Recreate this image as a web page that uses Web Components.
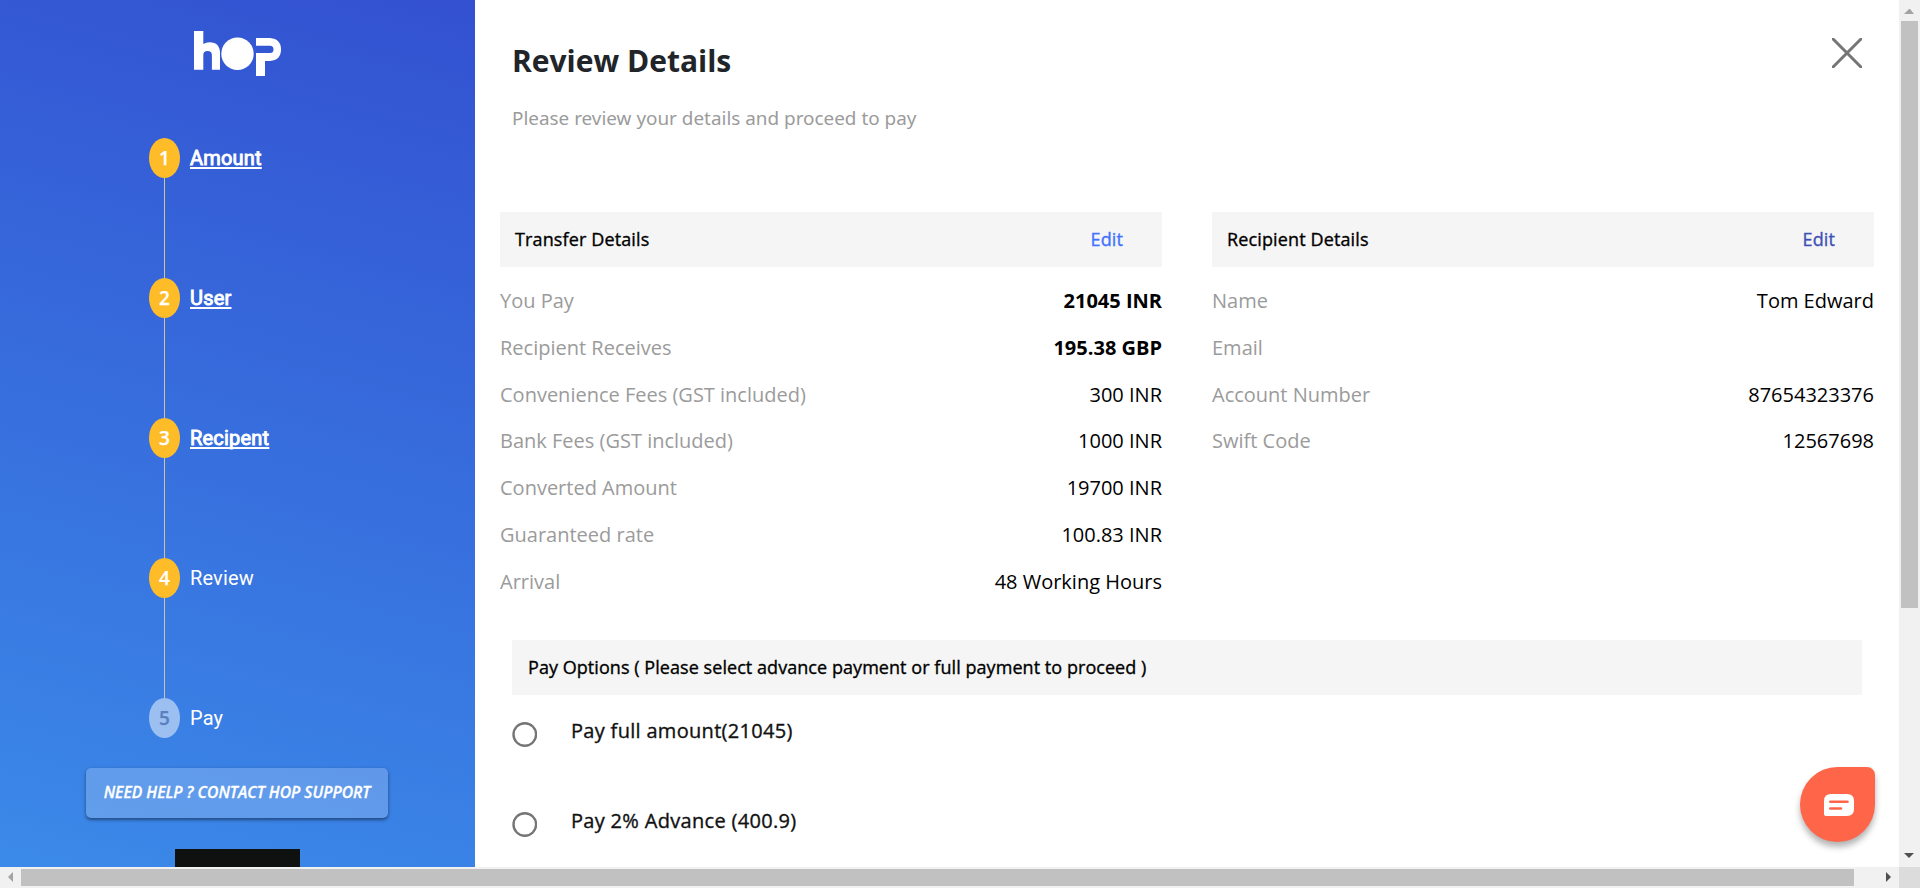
<!DOCTYPE html>
<html lang="en">
<head>
<meta charset="utf-8">
<title>Review Details</title>
<style>
html,body{margin:0;height:100%;overflow:hidden;background:#fff}
body{font-family:"Open Sans","Noto Sans",sans-serif;color:#000}
</style>
</head>
<body>
<hop-window>
  <hop-sidebar slot="side">
    <hop-step n="1" link>Amount</hop-step>
    <hop-step n="2" link>User</hop-step>
    <hop-step n="3" link>Recipent</hop-step>
    <hop-step n="4">Review</hop-step>
    <hop-step n="5" pending>Pay</hop-step>
  </hop-sidebar>
  <hop-review>
    <hop-panel slot="panels" heading="Transfer Details" style="--edit:#4172ff">
      <hop-row label="You Pay" strong>21045 INR</hop-row>
      <hop-row label="Recipient Receives" strong>195.38 GBP</hop-row>
      <hop-row label="Convenience Fees (GST included)">300 INR</hop-row>
      <hop-row label="Bank Fees (GST included)">1000 INR</hop-row>
      <hop-row label="Converted Amount">19700 INR</hop-row>
      <hop-row label="Guaranteed rate">100.83 INR</hop-row>
      <hop-row label="Arrival">48 Working Hours</hop-row>
    </hop-panel>
    <hop-panel slot="panels" heading="Recipient Details" style="--edit:#3f51b5">
      <hop-row label="Name">Tom Edward</hop-row>
      <hop-row label="Email"></hop-row>
      <hop-row label="Account Number">87654323376</hop-row>
      <hop-row label="Swift Code">12567698</hop-row>
    </hop-panel>
    <hop-option slot="options">Pay full amount(21045)</hop-option>
    <hop-option slot="options">Pay 2% Advance (400.9)</hop-option>
  </hop-review>
  <hop-chat slot="chat"></hop-chat>
</hop-window>
<script>
const define = (name, html) => customElements.define(name, class extends HTMLElement {
  constructor() {
    super();
    const t = document.createElement('template');
    t.innerHTML = typeof html === 'function' ? html(this) : html;
    this.attachShadow({mode: 'open'}).append(t.content.cloneNode(true));
  }
});

define('hop-window', `
<style>
:host{display:grid;grid-template-columns:1899px 21px;grid-template-rows:867px 21px;width:1920px;height:888px;position:relative;overflow:hidden}
.view{display:flex;overflow:hidden;min-height:0}
.v{background:#f1f1f1;display:flex;flex-direction:column;align-items:center}
.h{background:#f1f1f1;display:flex;align-items:center}
.corner{background:#dcdcdc}
.v i{width:17px;height:587px;background:#c1c1c1;margin-bottom:auto}
.h i{height:17px;width:1833px;background:#c1c1c1;margin-right:auto}
svg{width:21px;height:21px;display:block;flex:none}
</style>
<div class="view"><slot name="side"></slot><slot></slot></div>
<div class="v"><svg><path d="M5 14 10 9h1l4 5z" fill="#a3a3a3"/></svg><i></i><svg><path d="M5 7h10l-5 5z" fill="#505050"/></svg></div>
<div class="h"><svg><path d="M13 5v10l-5-5z" fill="#a3a3a3"/></svg><i></i><svg><path d="M8 5v10l5-5z" fill="#505050"/></svg></div>
<div class="corner"></div>
<slot name="chat"></slot>`);

define('hop-sidebar', `
<style>
:host{display:flex;flex-direction:column;align-items:center;width:475px;height:867px;flex:none;overflow:hidden;background:linear-gradient(195deg,#3351d1,#3b8ae9)}
.logo{display:block;width:87px;height:45px;margin-top:31px;flex:none}
.steps{width:177px;margin:62px 0 30px;flex:none}
button{width:302px;height:50px;flex:none;border:0;border-radius:5px;padding:0 0 2px;margin-right:1px;background:rgba(255,255,255,.2);color:#fff;font:italic 600 15.700px "Open Sans",sans-serif;-webkit-text-stroke:.3px #fff;white-space:nowrap;box-shadow:0 2px 3px rgba(0,0,0,.35),0 1px 5px rgba(0,0,0,.15)}
.store{width:125px;height:48px;margin-top:31px;background:#0f1110;flex:none}
</style>
<svg class="logo" viewBox="0 0 87 45" fill="#fff"><path d="M0 0H9.300V13Q12 11.300 15.500 11.300Q26 11.300 26 22.500V38.800H17.900V24Q17.900 20 13.500 20Q9.300 20 9.300 24V38.800H0Z"/><circle cx="43.500" cy="22.700" r="16.200"/><path d="M62 7H76Q87 8 87 18.500Q87 29 76 30H71V45H62V22H76Q79.500 22 79.500 18.500Q79.500 14.800 76 14.800H62Z"/></svg>
<div class="steps"><slot></slot></div>
<button>NEED HELP ? CONTACT HOP SUPPORT</button>
<div class="store"></div>`);

define('hop-step', el => `
<style>
:host{display:block;height:140px}
:host([pending]){height:40px}
.line{display:flex;align-items:center;gap:10px;height:40px}
b{width:31px;height:40px;border-radius:50%;background:#ffbc29;color:#fff;display:flex;align-items:center;justify-content:center;font:600 19px "Open Sans",sans-serif;-webkit-text-stroke:.25px}
:host([pending]) b{background:rgba(255,255,255,.5);color:#5a80bf}
span{font:20px Roboto,sans-serif;color:#fff;letter-spacing:.15px}
:host([link]) span{text-decoration:underline;text-decoration-thickness:2px;text-underline-offset:2px;text-decoration-skip-ink:none;-webkit-text-stroke:.9px #fff;letter-spacing:.2px}
i{display:block;width:1px;height:100px;margin-left:15px;background:#ccc2a4}
:host([pending]) i{display:none}
</style>
<div class="line"><b>${el.getAttribute('n')}</b><span><slot></slot></span></div><i></i>`);

define('hop-review', `
<style>
:host{display:flex;flex-direction:column;flex:1;min-width:0;height:867px;overflow:hidden;padding:0 25px;box-sizing:border-box}
header{display:flex;justify-content:space-between;height:212px;flex:none;padding:0 12px}
h1{margin:36px 0 0;font:700 30px/50px "Open Sans",sans-serif;color:#212529}
p{margin:17px 0 0;font:18.900px/30px "Noto Sans",sans-serif;color:#9b9b9b}
.x{width:30px;height:30px;margin-top:38px}
.panels{display:grid;grid-template-columns:662px 662px;gap:50px;height:428px;flex:none}
h2{margin:0 12px 10px;height:55px;flex:none;background:#f5f5f5;padding-left:16px;font:400 18px/55px "Open Sans",sans-serif;letter-spacing:.055px;-webkit-text-stroke:.35px #000;color:#000}
.options{margin:0 12px}
</style>
<header><div><h1>Review Details</h1><p>Please review your details and proceed to pay</p></div>
<svg class="x" viewBox="0 0 30 30"><path d="M0 0 30 30M30 0 0 30" stroke="#757575" stroke-width="3"/></svg></header>
<div class="panels"><slot name="panels"></slot></div>
<h2>Pay Options ( Please select advance payment or full payment to proceed )</h2>
<div class="options"><slot name="options"></slot></div>`);

define('hop-panel', el => `
<style>
:host{display:block}
.head{display:flex;justify-content:space-between;height:55px;background:#f5f5f5;padding:0 39px 0 15px;font:400 18px/55px "Open Sans",sans-serif;letter-spacing:.13px;-webkit-text-stroke:.35px;margin-bottom:11px}
a{color:var(--edit)}
</style>
<div class="head"><span>${el.getAttribute('heading')}</span><a>Edit</a></div><slot></slot>`);

define('hop-row', el => `
<style>
:host{display:flex;justify-content:space-between;height:46.800px;line-height:46.800px;font-size:20px}
span{color:#9b9b9b}
:host([strong]) b{font-weight:700}
b{font-weight:400;color:#000}
</style>
<span>${el.getAttribute('label')}</span><b><slot></slot></b>`);

define('hop-option', `
<style>
:host{display:flex;height:89.500px;font-size:20px;line-height:34px;letter-spacing:.31px;-webkit-text-stroke:.35px #111;color:#111}
svg{width:25px;height:25px;margin:17.300px 34px 0 0;flex:none}
span{margin-top:9px}
</style>
<svg viewBox="0 0 25 25"><circle cx="12.800" cy="12.500" r="11.300" fill="none" stroke="#757575" stroke-width="2.400"/></svg><span><slot></slot></span>`);

define('hop-chat', `
<style>
:host{position:absolute;left:1800px;top:767px;width:75px;height:75px;border-radius:50% 8px 50% 50%;background:#ff6549;box-shadow:0 5px 6px rgba(0,0,0,.3)}
svg{display:block;width:75px;height:75px}
</style>
<svg viewBox="0 0 75 75"><path d="M31 27H47Q54 27 54 34V42Q54 49 47 49H26Q24 49 24 47V34Q24 27 31 27Z" fill="#fff"/><path d="M30.300 34.700H47.500M30.300 41.500H41" stroke="#ff6549" stroke-width="2.600" stroke-linecap="round"/></svg>`);
</script>
</body>
</html>
